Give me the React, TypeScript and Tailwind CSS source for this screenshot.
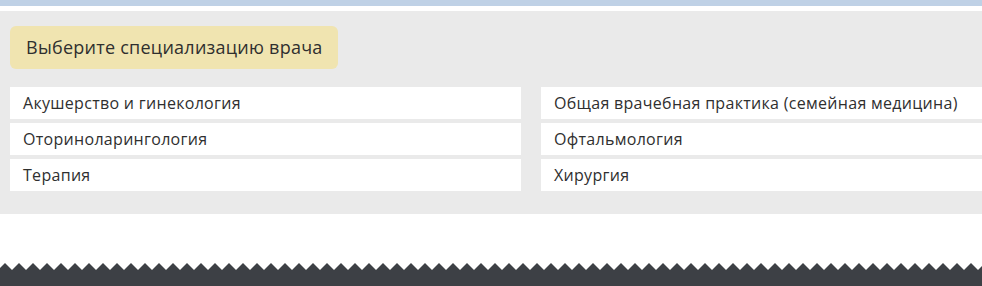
import React from "react";

const left = ["Акушерство и гинекология", "Оториноларингология", "Терапия"];
const right = ["Общая врачебная практика (семейная медицина)", "Офтальмология", "Хирургия"];

function Row({ label }: { label: string }) {
  return (
    <div className="h-[32px] bg-white flex items-center pl-[13px] text-[16px] tracking-[0.3px] text-[#2f2f2f] whitespace-nowrap">
      {label}
    </div>
  );
}

export default function App() {
  return (
    <div className="w-[982px] h-[286px] overflow-hidden bg-white" style={{ fontFamily: '"Open Sans", "Noto Sans", sans-serif' }}>
      <div className="h-[6px] bg-[#bfd1e6]" />
      <div className="h-[5px] bg-white" />
      <div className="bg-[#eaeaea] pt-[15px] pb-[23px] pl-[10px] h-[203px]">
        <div className="w-[328px] h-[43px] rounded-[6px] bg-[#f0e4b0] flex items-center pl-[16px] text-[18px] tracking-[0.25px] text-[#2f2f2f]">
          Выберите специализацию врача
        </div>
        <div className="mt-[18px] flex gap-[20px] w-[1042px]">
          <div className="w-[511px] flex flex-col gap-[4px]">
            {left.map((l) => (
              <Row key={l} label={l} />
            ))}
          </div>
          <div className="w-[511px] flex flex-col gap-[4px]">
            {right.map((l) => (
              <Row key={l} label={l} />
            ))}
          </div>
        </div>
      </div>
      <div className="h-[49px] bg-white" />
      <svg width="982" height="23" className="block">
        <defs>
          <filter id="bl" x="-5%" y="-50%" width="110%" height="200%">
            <feGaussianBlur stdDeviation="0.6" />
          </filter>
          <pattern id="zz" width="14" height="7" patternUnits="userSpaceOnUse" x="-2">
            <polygon points="0,7 7,0 14,7" fill="#3d4045" />
          </pattern>
        </defs>
        <rect x="0" y="0" width="982" height="7" fill="url(#zz)" filter="url(#bl)" />
        <rect x="0" y="7" width="982" height="16" fill="#3d4045" />
      </svg>
    </div>
  );
}
